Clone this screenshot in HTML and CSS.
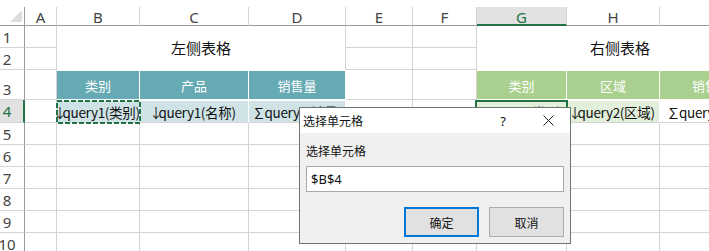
FILE: index.html
```html
<!DOCTYPE html>
<html lang="zh-CN">
<head>
    <meta charset="UTF-8">
    <title>选择单元格</title>
    <link rel="stylesheet" href="styles.css">
</head>
<body>
<div class="sheet">
    <!-- 列标题 -->
    <div class="c ch corner"><span class="tri"></span></div>
    <div class="c ch">A</div>
    <div class="c ch">B</div>
    <div class="c ch">C</div>
    <div class="c ch">D</div>
    <div class="c ch">E</div>
    <div class="c ch">F</div>
    <div class="c ch sel">G</div>
    <div class="c ch">H</div>
    <div class="c ch">I</div>

    <!-- 1-2 -->
    <div class="c rh">1</div>
    <div class="c"></div>
    <div class="c title">左侧表格</div>
    <div class="c"></div>
    <div class="c"></div>
    <div class="c title">右侧表格</div>
    <div class="c rh">2</div>
    <div class="c"></div>
    <div class="c"></div>
    <div class="c"></div>

    <!-- 3 -->
    <div class="c rh tall">3</div>
    <div class="c"></div>
    <div class="c th teal">类别</div>
    <div class="c th teal">产品</div>
    <div class="c th teal">销售量</div>
    <div class="c"></div>
    <div class="c"></div>
    <div class="c th green">类别</div>
    <div class="c th green">区域</div>
    <div class="c th green">销售量</div>

    <!-- 4 -->
    <div class="c rh sel">4</div>
    <div class="c"></div>
    <div class="c td teal-l copy"><div class="clip"><span><b class="ar">↓</b>query1(类别)</span></div>
        <svg class="ants" width="85" height="24"><rect x="1" y="1" width="83" height="22" fill="none" stroke="#217346" stroke-width="2" stroke-dasharray="5 2"/></svg>
    </div>
    <div class="c td teal-l"><div class="clip"><span><b class="ar">↓</b>query1(名称)</span></div></div>
    <div class="c td teal-l"><div class="clip"><span><b class="sum">∑</b>query1(销量)</span></div></div>
    <div class="c"></div>
    <div class="c"></div>
    <div class="c td green-l active"><div class="clip"><span><b class="ar">↓</b>query2(类别)</span></div></div>
    <div class="c td green-l"><div class="clip"><span><b class="ar">↓</b>query2(区域)</span></div></div>
    <div class="c td"><div class="clip"><span><b class="sum">∑</b>query2(销量)</span></div></div>

    <div class="c rh">5</div><div class="c"></div><div class="c"></div><div class="c"></div><div class="c"></div><div class="c"></div><div class="c"></div><div class="c"></div><div class="c"></div><div class="c"></div>
    <div class="c rh">6</div><div class="c"></div><div class="c"></div><div class="c"></div><div class="c"></div><div class="c"></div><div class="c"></div><div class="c"></div><div class="c"></div><div class="c"></div>
    <div class="c rh">7</div><div class="c"></div><div class="c"></div><div class="c"></div><div class="c"></div><div class="c"></div><div class="c"></div><div class="c"></div><div class="c"></div><div class="c"></div>
    <div class="c rh">8</div><div class="c"></div><div class="c"></div><div class="c"></div><div class="c"></div><div class="c"></div><div class="c"></div><div class="c"></div><div class="c"></div><div class="c"></div>
    <div class="c rh">9</div><div class="c"></div><div class="c"></div><div class="c"></div><div class="c"></div><div class="c"></div><div class="c"></div><div class="c"></div><div class="c"></div><div class="c"></div>
    <div class="c rh">10</div><div class="c"></div><div class="c"></div><div class="c"></div><div class="c"></div><div class="c"></div><div class="c"></div><div class="c"></div><div class="c"></div><div class="c"></div>
</div>

<div class="dlg">
    <div class="dlg-bar">
        <span class="dlg-title">选择单元格</span>
        <span class="dlg-help">?</span>
        <svg class="dlg-close" width="11" height="11" viewBox="0 0 11 11">
            <path d="M0.5 0.5 L10.5 10.5 M10.5 0.5 L0.5 10.5" stroke="#222" stroke-width="1" fill="none"/>
        </svg>
    </div>
    <div class="dlg-body">
        <div class="dlg-label">选择单元格</div>
        <div class="dlg-input">$B$4</div>
        <div class="dlg-btns">
            <div class="btn btn-ok">确定</div>
            <div class="btn">取消</div>
        </div>
    </div>
</div>
</body>
</html>
```

FILE: styles.css
```css
* {
    margin: 0;
    padding: 0;
    box-sizing: border-box;
}

body {
    background: #fff;
    width: 709px;
    height: 251px;
    overflow: hidden;
    position: relative;
    font-family: "Noto Sans", "Noto Sans CJK SC", sans-serif;
}

.sheet {
    display: grid;
    grid-template-columns: 25px 32px 83px 109px 97px 67px 64px 90px 93px 104px;
    grid-template-rows: 19px 22px 22px 30px 23px repeat(6, 22px);
    padding-top: 7px;
    width: max-content;
}

.c {
    border-right: 1px solid #d4d4d4;
    border-bottom: 1px solid #d4d4d4;
    display: flex;
    align-items: center;
    justify-content: center;
    overflow: hidden;
    white-space: nowrap;
    font-size: 14px;
    color: #111;
    position: relative;
}

/* 列标题 */
.ch {
    color: #444;
    font-size: 15px;
    border-bottom-color: #9b9b9b;
    padding-top: 2px;
}

.ch.sel {
    background: #e1e1e1;
    color: #217346;
    border-bottom: 2px solid #217346;
}

.corner {
    border-right-color: #9b9b9b;
}

.tri {
    position: absolute;
    right: 2px;
    bottom: 3px;
    width: 0;
    height: 0;
    border-left: 12px solid transparent;
    border-bottom: 12px solid #dcdcdc;
}

/* 行标题 */
.rh {
    color: #444;
    border-right-color: #9b9b9b;
    padding-right: 10px;
    font-size: 15px;
}

.rh.tall {
    padding-top: 8px;
}

.rh.sel {
    background: #e1e1e1;
    color: #217346;
    border-right: 2px solid #217346;
    padding-right: 9px;
}

.title {
    grid-column: span 3;
    grid-row: span 2;
    font-family: "Noto Sans CJK SC", sans-serif;
    font-size: 15px;
    border-bottom-color: #fff;
}

.th {
    color: #fff;
    font-family: "Noto Sans CJK SC", sans-serif;
    font-size: 13px;
    border-right-color: #fff;
    border-bottom-color: #fff;
    box-shadow: inset 0 1px #fff;
    padding-top: 2px;
}

.teal {
    background: #66aab4;
}

.green {
    background: #a9d08e;
}

/* 数据行 */
.td {
    font-family: "Noto Sans CJK SC", sans-serif;
    font-size: 13.5px;
    letter-spacing: -0.3px;
    border-top: 1px solid #fff;
    overflow: visible;
}

.clip {
    width: 100%;
    height: 100%;
    overflow: hidden;
    display: flex;
    align-items: center;
    justify-content: center;
    padding-top: 1px;
}

.clip span {
    flex-shrink: 0;
}

.ar {
    font-weight: normal;
    margin: 0 -4px 0 -3px;
}

.sum {
    font-weight: normal;
    margin-right: -1px;
}

.teal-l {
    background: #cfe3e7;
    border-right-color: #fff;
}

.green-l {
    background: #e2efda;
    border-right-color: #fff;
}

.copy {
    z-index: 2;
}

.ants {
    position: absolute;
    left: -1px;
    top: -1px;
}

.active {
    z-index: 2;
}

.active::after {
    content: "";
    position: absolute;
    left: -2px;
    right: -2px;
    top: -1px;
    bottom: -2px;
    border: 2px solid #217346;
}

/* 对话框 */
.dlg {
    position: absolute;
    left: 299px;
    top: 107px;
    width: 272px;
    height: 137px;
    border: 1px solid #6b7872;
    background: #f0f0f0;
    font-family: "Noto Sans CJK SC", "Noto Sans", sans-serif;
    font-size: 12px;
    color: #111;
    z-index: 5;
}

.dlg-bar {
    height: 25px;
    background: #fff;
    display: flex;
    align-items: center;
    padding-left: 3px;
}

.dlg-title {
    flex: 1;
}

.dlg-help {
    font-family: "Noto Sans", sans-serif;
    font-size: 13px;
    margin-right: 37px;
}

.dlg-close {
    margin-right: 16px;
}

.dlg-body {
    padding: 9px 6px 0 6px;
}

.dlg-label {
    line-height: 18px;
}

.dlg-input {
    margin-top: 6px;
    height: 26px;
    border: 1px solid #a9a9a9;
    background: #fff;
    padding-left: 4px;
    font-family: "Noto Sans", sans-serif;
    font-size: 13px;
    line-height: 24px;
}

.dlg-btns {
    display: flex;
    justify-content: flex-end;
    gap: 10px;
    margin-top: 15px;
}

.btn {
    width: 75px;
    height: 30px;
    border: 1px solid #adadad;
    background: #e1e1e1;
    display: flex;
    align-items: center;
    justify-content: center;
}

.btn-ok {
    border: 2px solid #0078d7;
}
```
